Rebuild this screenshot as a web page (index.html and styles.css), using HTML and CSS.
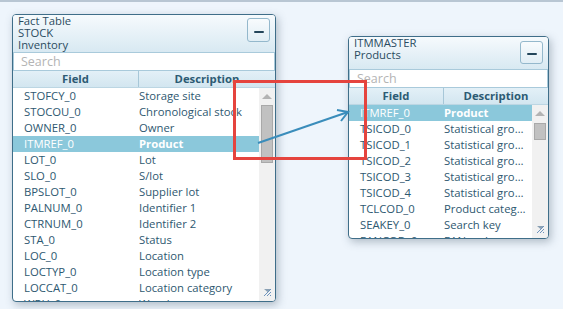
FILE: index.html
```html
<!DOCTYPE HTML>
<html>
<head>
	<meta charset="utf-8" />
	<title>Data model</title>
	<link rel="stylesheet" href="styles.css">
</head>
<body>
	<div class="canvas">
		<div class="panel panel-stock">
			<div class="head">
				<div class="title">Fact Table<br>STOCK<br>Inventory</div>
				<button class="min" type="button"><span></span></button>
			</div>
			<input class="search" type="text" placeholder="Search" />
			<div class="cols">
				<div class="f">Field</div>
				<div class="d">Description</div>
			</div>
			<div class="body">
				<ul class="list">
					<li><span class="f">STOFCY_0</span><span class="d">Storage site</span></li>
					<li><span class="f">STOCOU_0</span><span class="d">Chronological stock</span></li>
					<li><span class="f">OWNER_0</span><span class="d">Owner</span></li>
					<li class="sel"><span class="f">ITMREF_0</span><span class="d">Product</span></li>
					<li><span class="f">LOT_0</span><span class="d">Lot</span></li>
					<li><span class="f">SLO_0</span><span class="d">S/lot</span></li>
					<li><span class="f">BPSLOT_0</span><span class="d">Supplier lot</span></li>
					<li><span class="f">PALNUM_0</span><span class="d">Identifier 1</span></li>
					<li><span class="f">CTRNUM_0</span><span class="d">Identifier 2</span></li>
					<li><span class="f">STA_0</span><span class="d">Status</span></li>
					<li><span class="f">LOC_0</span><span class="d">Location</span></li>
					<li><span class="f">LOCTYP_0</span><span class="d">Location type</span></li>
					<li><span class="f">LOCCAT_0</span><span class="d">Location category</span></li>
					<li><span class="f">WRH_0</span><span class="d">Warehouse</span></li>
				</ul>
				<div class="scroll">
					<div class="up"></div>
					<div class="thumb"></div>
					<svg class="grip" width="9" height="8" viewBox="0 0 9 8">
						<path d="M1 1h7L4.5 4z" fill="#8aa0b4"/>
						<path d="M1 8L8 1M4 8L8 4M7 8L8 7" stroke="#6d93bd" stroke-width="1"/>
					</svg>
				</div>
			</div>
		</div>

		<div class="panel panel-item">
			<div class="head">
				<div class="title">ITMMASTER<br>Products</div>
				<button class="min" type="button"><span></span></button>
			</div>
			<input class="search" type="text" placeholder="Search" />
			<div class="cols">
				<div class="f">Field</div>
				<div class="d">Description</div>
			</div>
			<div class="body">
				<ul class="list">
					<li class="sel"><span class="f">ITMREF_0</span><span class="d">Product</span></li>
					<li><span class="f">TSICOD_0</span><span class="d">Statistical group 1</span></li>
					<li><span class="f">TSICOD_1</span><span class="d">Statistical group 2</span></li>
					<li><span class="f">TSICOD_2</span><span class="d">Statistical group 3</span></li>
					<li><span class="f">TSICOD_3</span><span class="d">Statistical group 4</span></li>
					<li><span class="f">TSICOD_4</span><span class="d">Statistical group 5</span></li>
					<li><span class="f">TCLCOD_0</span><span class="d">Product category</span></li>
					<li><span class="f">SEAKEY_0</span><span class="d">Search key</span></li>
					<li><span class="f">EANCOD_0</span><span class="d">EAN code</span></li>
				</ul>
				<div class="scroll">
					<div class="up"></div>
					<div class="thumb"></div>
					<svg class="grip" width="9" height="8" viewBox="0 0 9 8">
						<path d="M1 1h7L4.5 4z" fill="#8aa0b4"/>
						<path d="M1 8L8 1M4 8L8 4M7 8L8 7" stroke="#6d93bd" stroke-width="1"/>
					</svg>
				</div>
			</div>
		</div>

		<svg class="overlay" width="563" height="309" viewBox="0 0 563 309">
			<line x1="258" y1="143" x2="348" y2="112" stroke="#3a8dbb" stroke-width="2"/>
			<polyline points="337,110 348,112 341,121" fill="none" stroke="#3a8dbb" stroke-width="2"/>
			<rect x="234.5" y="81.5" width="131" height="77" fill="none" stroke="#e5443e" stroke-width="3"/>
		</svg>
	</div>
</body>
</html>
```

FILE: styles.css
```css
body {
	background-color: #eef5fc;
	border-top: 2px solid #b8c6d3;
	color: #2e5870;
	font-family: 'Open Sans', 'Noto Sans', sans-serif;
	font-size: 11.3px;
	margin: 0;
	padding: 0;
}
.canvas {
	height: 307px;
	overflow: hidden;
	position: relative;
}
.overlay {
	left: 0;
	pointer-events: none;
	position: absolute;
	top: -2px;
}

.panel {
	background-color: #fff;
	border: 1px solid #3f6e89;
	border-radius: 4px;
	box-shadow: 2px 3px 8px rgba(60, 80, 100, .35);
	box-sizing: border-box;
	display: flex;
	flex-direction: column;
	overflow: hidden;
	position: absolute;
}
.panel-stock {
	height: 288px;
	left: 12px;
	top: 12px;
	width: 264px;
	--field-w: 125px;
}
.panel-item {
	height: 203px;
	left: 348px;
	top: 34px;
	width: 201px;
	--field-w: 94px;
}

.head {
	background: linear-gradient(#f6fafd, #d8e9f2);
	display: flex;
	flex-shrink: 0;
	justify-content: space-between;
	padding: 0 5px 0 5px;
}
.panel-stock .head {
	height: 37px;
}
.panel-item .head {
	height: 32px;
}
.title {
	color: #2b4c61;
	line-height: 12px;
}
.min {
	background: linear-gradient(#f8fbfd, #e1eef5);
	border: 1px solid #94b8cc;
	border-radius: 3px;
	display: flex;
	align-items: center;
	justify-content: center;
	height: 24px;
	margin-top: 3px;
	padding: 0;
	width: 23px;
}
.panel-item .min {
	height: 23px;
	margin-top: 4px;
}
.min span {
	background-color: #23455a;
	border-radius: 1px;
	display: block;
	height: 2px;
	margin-top: 3px;
	width: 10px;
}

.search {
	border: 1px solid #a9cadb;
	box-sizing: border-box;
	color: #333;
	flex-shrink: 0;
	font-family: inherit;
	font-size: 12.5px;
	height: 19px;
	margin: 0;
	outline: none;
	padding: 0 0 0 7px;
	width: 100%;
}
.search::placeholder {
	color: #b4b4b4;
}

.cols {
	background: linear-gradient(#e3f0f7, #d3e6f0);
	border-bottom: 1px solid #bcd6e3;
	color: #2d5b74;
	display: flex;
	flex-shrink: 0;
	font-weight: bold;
	height: 17px;
	line-height: 16px;
	box-sizing: border-box;
}
.cols .f {
	border-right: 1px solid #a7c7d8;
	text-align: center;
	width: var(--field-w);
}
.cols .d {
	flex: 1;
	text-align: center;
}

.body {
	display: flex;
	flex: 1;
	min-height: 0;
}
.list {
	flex: 1;
	list-style-type: none;
	margin: 0;
	min-width: 0;
	padding: 0;
}
.list > li {
	display: flex;
	height: 16px;
	line-height: 16px;
	white-space: nowrap;
}
.list .f {
	box-sizing: border-box;
	flex-shrink: 0;
	padding-left: 11px;
	width: calc(var(--field-w) + 1px);
}
.list .d {
	flex: 1;
	overflow: hidden;
	padding-right: 3px;
	text-overflow: ellipsis;
}
.list > li.sel {
	background-color: #8bc8db;
	color: #fff;
	font-weight: bold;
}
.list > li.sel .f {
	font-weight: normal;
}

.scroll {
	align-items: center;
	background-color: #f1f1f1;
	display: flex;
	flex-direction: column;
	flex-shrink: 0;
	width: 16px;
}
.up {
	border-bottom: 5px solid #b3b3b3;
	border-left: 5px solid transparent;
	border-right: 5px solid transparent;
	height: 0;
	margin-top: 6px;
	width: 0;
}
.thumb {
	background-color: #c1c1c1;
	border: 1px solid #a9a9a9;
	box-sizing: border-box;
	width: 12px;
}
.panel-stock .thumb {
	height: 58px;
	margin-top: 6px;
}
.panel-item .thumb {
	height: 17px;
	margin-top: 7px;
}
.grip {
	margin-top: auto;
	margin-bottom: 5px;
}
```
